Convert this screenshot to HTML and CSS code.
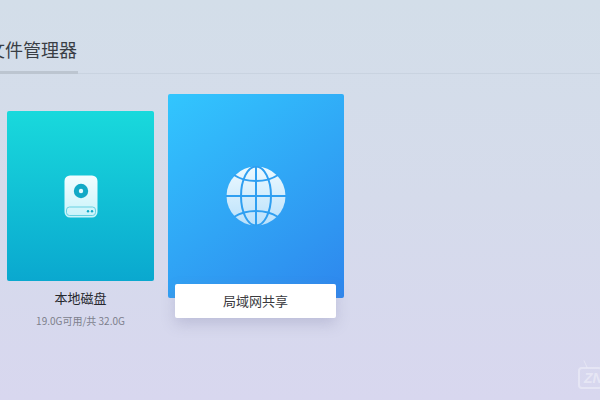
FILE: index.html
```html
<!DOCTYPE html>
<html lang="zh-CN">
<head>
  <meta charset="UTF-8" />
  <title>文件管理器</title>
  <link rel="stylesheet" href="styles.css">
</head>
<body>

  <header class="top">
    <h1 class="title">文件管理器</h1>
  </header>

  <main class="cards">
    <div class="item">
      <div class="card card-disk">
        <svg width="34" height="43" viewBox="0 0 34 43">
          <defs>
            <linearGradient id="diskFill" x1="0" y1="0" x2="0" y2="1">
              <stop offset="0" stop-color="#f2fdff"/>
              <stop offset="1" stop-color="#c8f3fa"/>
            </linearGradient>
          </defs>
          <path fill="url(#diskFill)" d="M6 .5h22a5.500 5.500 0 0 1 5.500 5.500v31a5.500 5.500 0 0 1-5.500 5.500H6A5.500 5.500 0 0 1 .5 37V6A5.500 5.500 0 0 1 6 .5z"/>
          <circle cx="17" cy="16" r="7.200" fill="#12a9c6"/>
          <circle cx="17" cy="16" r="2.200" fill="#e6fbff"/>
          <rect x="2.500" y="32" width="29" height="8.500" rx="3" fill="none" stroke="#4cc8dc" stroke-width=".8"/>
          <circle cx="24" cy="36.300" r="1.200" fill="#12a9c6"/>
          <circle cx="28" cy="36.300" r="1.200" fill="#12a9c6"/>
        </svg>
      </div>
      <div class="name">本地磁盘</div>
      <div class="size">19.0G可用/共 32.0G</div>
    </div>

    <div class="item item-focus">
      <div class="card card-net">
        <svg width="60" height="60" viewBox="0 0 60 60">
          <defs>
            <linearGradient id="globeFill" x1="0" y1="0" x2="0" y2="1">
              <stop offset="0" stop-color="#eefaff"/>
              <stop offset="1" stop-color="#b9e0fb"/>
            </linearGradient>
          </defs>
          <circle cx="30" cy="30" r="29.500" fill="url(#globeFill)"/>
          <g fill="none" stroke="#2f9ff1" stroke-width="2">
            <path d="M30 0v60"/>
            <path d="M0 30h60"/>
            <ellipse cx="30" cy="30" rx="15" ry="29.500"/>
            <path d="M8 9c6 4 14 6 22 6s16-2 22-6"/>
            <path d="M8 51c6-4 14-6 22-6s16 2 22 6"/>
          </g>
        </svg>
      </div>
      <div class="caption">局域网共享</div>
    </div>
  </main>

  <div class="watermark">
    <span class="tv-antenna"></span>
    <span class="tv-text">ZN</span>
  </div>

</body>
</html>
```

FILE: styles.css
```css
html, body {
  margin: 0;
  height: 100%;
}

body {
  width: 600px;
  height: 400px;
  overflow: hidden;
  position: relative;
  font-family: "Noto Sans CJK SC", "Noto Sans", sans-serif;
  background: linear-gradient(180deg, #d3dee9 0%, #d5dbeb 50%, #d8d7ef 100%);
  color: #222;
}

.top {
  height: 74px;
  box-sizing: border-box;
  border-bottom: 1px solid #c9d3e0;
}

.title {
  width: 91px;
  height: 74px;
  box-sizing: border-box;
  margin: 0 0 0 -13px;
  padding: 36px 0 0 0;
  font-size: 18px;
  font-weight: 400;
  line-height: 26px;
  color: #3a3e45;
  white-space: nowrap;
  border-bottom: 3px solid #bcc5d0;
}

.cards {
  display: flex;
  align-items: flex-start;
  gap: 14px;
  padding: 20px 0 0 7px;
}

.item {
  display: flex;
  flex-direction: column;
  align-items: center;
  margin-top: 17px;
  width: 147px;
}

.item-focus {
  margin-top: 0;
  width: 176px;
}

.card {
  display: flex;
  align-items: center;
  justify-content: center;
  border-radius: 2px;
}

.card-disk {
  width: 147px;
  height: 170px;
  background: linear-gradient(180deg, #19d9dc 0%, #0aa8cf 100%);
}

.card-net {
  width: 176px;
  height: 204px;
  background: linear-gradient(145deg, #32c6fe 0%, #2e86ed 100%);
}

.name {
  margin-top: 7px;
  font-size: 13px;
  line-height: 19px;
  color: #26282e;
}

.size {
  margin-top: 6px;
  font-size: 10px;
  line-height: 16px;
  color: #7d7f8c;
}

.caption {
  align-self: flex-start;
  width: 161px;
  height: 34px;
  margin: -14px 0 0 7px;
  background: #fff;
  border-radius: 2px;
  font-size: 13px;
  line-height: 33px;
  text-align: center;
  color: #3a3a3e;
  box-shadow: 0 6px 14px rgba(130, 130, 170, 0.3);
}

.watermark {
  position: absolute;
  left: 578px;
  top: 367px;
  width: 22px;
  height: 18px;
  border: 2px solid rgba(255, 255, 255, 0.35);
  border-right: none;
  border-radius: 4px;
}

.tv-antenna {
  position: absolute;
  left: 5px;
  top: -9px;
  width: 1px;
  height: 8px;
  background: rgba(255, 255, 255, 0.35);
  transform: rotate(-25deg);
}

.tv-text {
  position: absolute;
  left: 4px;
  top: 0;
  font-family: "Liberation Sans", sans-serif;
  font-size: 14px;
  font-weight: 700;
  font-style: italic;
  line-height: 18px;
  color: rgba(255, 255, 255, 0.4);
}
```
